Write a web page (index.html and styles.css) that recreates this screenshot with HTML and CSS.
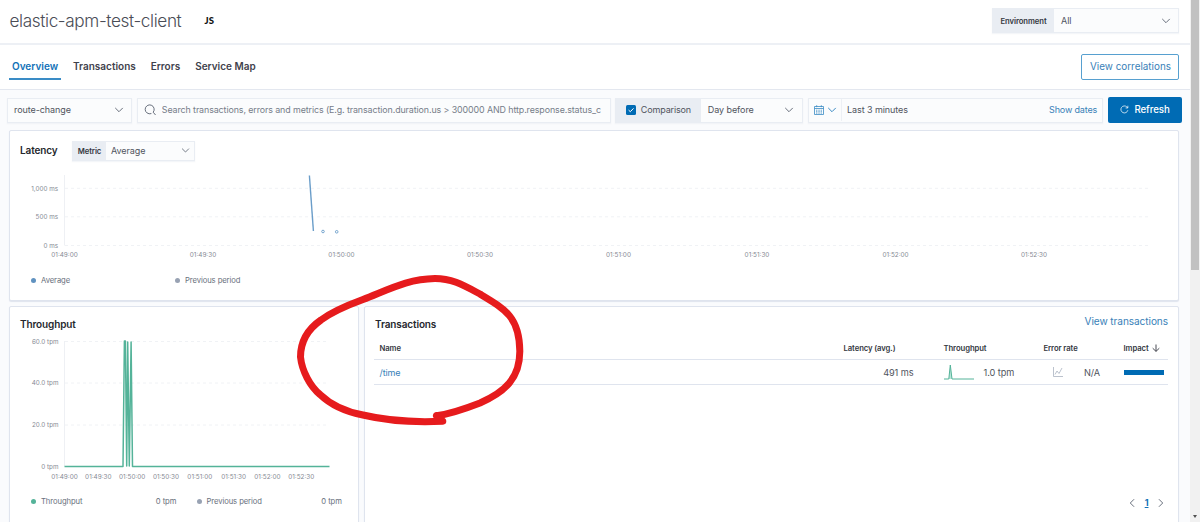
FILE: index.html
```html
<!DOCTYPE html>
<html lang="en">
<head>
<meta charset="utf-8">
<title>elastic-apm-test-client</title>
<link rel="stylesheet" href="styles.css">
</head>
<body>
<svg class="defs" width="0" height="0"><defs>
  <symbol id="down" viewBox="0 0 10 10"><path d="M1.500 3.200 5 6.700 8.500 3.200" fill="none" stroke="currentColor" stroke-linecap="round" stroke-linejoin="round"/></symbol>
</defs></svg>
<div class="app">
  <main class="page">
    <header class="header">
      <h1 class="title">elastic-apm-test-client</h1>
      <span class="agent">JS</span>
      <div class="control env"><span class="prepend">Environment</span><span class="value">All</span><svg class="chev"><use href="#down"/></svg></div>
    </header>
    <nav class="tabs">
      <a class="tab active">Overview</a><a class="tab">Transactions</a><a class="tab">Errors</a><a class="tab">Service Map</a>
      <button class="correlations">View correlations</button>
    </nav>
    <section class="filters">
      <div class="control type"><span class="value">route-change</span><svg class="chev"><use href="#down"/></svg></div>
      <div class="control search">
        <svg class="lens" viewBox="0 0 12 12"><path d="M7 9.700A4.500 4.500 0 1 1 9.200 8.200L11.300 10.700" fill="none" stroke="currentColor" stroke-linecap="round"/></svg>
        <span class="placeholder">Search transactions, errors and metrics (E.g. transaction.duration.us &gt; 300000 AND http.response.status_c</span>
      </div>
      <div class="control compare">
        <span class="check-label"><svg class="check" viewBox="0 0 10 10"><rect width="10" height="10" rx="1.500" fill="#006bb4"/><path d="M2.600 5.100 4.300 6.700 7.500 3.400" fill="none" stroke="#fff"/></svg>Comparison</span>
        <span class="value">Day before</span><svg class="chev"><use href="#down"/></svg>
      </div>
      <div class="control dates">
        <span class="quick">
          <svg class="cal" viewBox="0 0 10 10"><path d="M.5 1.500h9v8h-9zM.5 3.500h9M2.700.2v2M7.300.2v2" fill="none" stroke="currentColor" stroke-width=".8"/><path d="M2 5.200h6M2 6.700h6M2 8.100h6" stroke="currentColor" stroke-width=".8" stroke-dasharray="1 .65"/></svg>
          <svg class="chev"><use href="#down"/></svg>
        </span>
        <span class="value">Last 3 minutes</span><a class="show">Show dates</a>
      </div>
      <button class="refresh"><svg viewBox="0 0 10 10"><path d="M8.700 5.800A3.900 3.900 0 1 1 7.700 2.200L8.600 3.200M8.700.8V3.300H6.200" fill="none" stroke="currentColor" stroke-width=".8"/></svg>Refresh</button>
    </section>
    <section class="panel latency">
      <div class="panel-head"><h2>Latency</h2>
        <div class="control metric"><span class="prepend">Metric</span><span class="value">Average</span><svg class="chev"><use href="#down"/></svg></div>
      </div>
      <svg class="chart" width="1150" height="100" viewBox="20 165 1150 100">
        <g class="grid"><path d="M65 188.300H1149M65 216.800H1149M65 245.500H1149"/></g>
        <path class="axis" d="M64.500 175V245.500"/>
        <g class="ticks end"><text x="58" y="190.500">1,000 ms</text><text x="58" y="219">500 ms</text><text x="58" y="247.800">0 ms</text></g>
        <g class="ticks mid"><text x="64.500" y="257">01:49:00</text><text x="203" y="257">01:49:30</text><text x="341.500" y="257">01:50:00</text><text x="480" y="257">01:50:30</text><text x="618.500" y="257">01:51:00</text><text x="757" y="257">01:51:30</text><text x="895.500" y="257">01:52:00</text><text x="1034" y="257">01:52:30</text></g>
        <g class="latency-series"><path d="M309.400 175.500 313.400 231"/><circle cx="323" cy="231.500" r="1.300"/><circle cx="336.700" cy="231.800" r="1.300"/></g>
      </svg>
      <div class="legend"><span class="key avg">Average</span><span class="key prev">Previous period</span></div>
    </section>
    <div class="columns">
      <section class="panel throughput">
        <h2>Throughput</h2>
        <svg class="chart" width="330" height="150" viewBox="20 335 330 150">
          <g class="grid"><path d="M65 341.500H329M65 383H329M65 425H329"/></g>
          <path class="axis" d="M64.500 341V466"/>
          <g class="ticks end"><text x="58.500" y="343.600">60.0 tpm</text><text x="58.500" y="385.300">40.0 tpm</text><text x="58.500" y="427.200">20.0 tpm</text><text x="58.500" y="469">0 tpm</text></g>
          <g class="ticks mid"><text x="64.500" y="478.500">01:49:00</text><text x="98.300" y="478.500">01:49:30</text><text x="132.200" y="478.500">01:50:00</text><text x="166" y="478.500">01:50:30</text><text x="199.800" y="478.500">01:51:00</text><text x="233.600" y="478.500">01:51:30</text><text x="267.400" y="478.500">01:52:00</text><text x="301.200" y="478.500">01:52:30</text></g>
          <path class="tpm" d="M64.500 466.500H123L124.400 341H125.400L126.700 466L127.700 342L129.300 466L131.100 342L132.500 466.500H329.500"/>
        </svg>
        <div class="legend"><span class="key tp">Throughput</span><span class="num">0 tpm</span><span class="key prev">Previous period</span><span class="num">0 tpm</span></div>
      </section>
      <section class="panel transactions">
        <div class="tx-head"><h2>Transactions</h2><a>View transactions</a></div>
        <div class="row head"><span>Name</span><span class="right">Latency (avg.)</span><span>Throughput</span><span>Error rate</span><span>Impact <svg class="arrow" viewBox="0 0 8 8"><path d="M4 .5V7.300M.7 4.200 4 7.400 7.300 4.200" fill="none" stroke="currentColor" stroke-width=".9"/></svg></span></div>
        <div class="row">
          <a class="name">/time</a><span class="right">491 ms</span>
          <span class="cell"><svg class="spark" viewBox="0 0 30 18"><path d="M0 16H4.800L6.300 2 8 16H30" fill="#6dccb1" fill-opacity=".5" stroke="#54b399"/></svg>1.0 tpm</span>
          <span class="cell err"><svg class="noline" viewBox="0 0 10 10"><path d="M.5 0V9.500H10M2 7.500 4 4 6 6.500 9 1" fill="none" stroke="currentColor" stroke-width=".8"/></svg>N/A</span>
          <span class="bar"></span>
        </div>
        <div class="pager"><svg class="chev left"><use href="#down"/></svg><b>1</b><svg class="chev next"><use href="#down"/></svg></div>
      </section>
    </div>
  </main>
  <aside class="scrollbar"><div class="thumb"></div><i class="down"></i></aside>
  <svg class="annotation" viewBox="0 0 1200 522"><path d="M436.500 415.800C450 414 462 410 480 403C505 392 520 378 519.800 351C519.500 317 505 309 480 294C463 285 452 278.500 435 278.500C408 279 390 289 363 299.500C348 305 333 311 321 320C308 329 300.500 342 300.500 357C302 371 310 386 320 394.500C333 407 347 412 363 415C388 421 415 422.500 442.800 421.200L436.500 415.800"/></svg>
</div>
</body>
</html>
```
FILE: styles.css
```css
* { box-sizing: border-box; }
body { margin: 0; font-family: Inter, "Liberation Sans", sans-serif; font-size: 9px; letter-spacing: -.08px; color: #50545d; background: #fafbfd; overflow: hidden; }
h1, h2 { margin: 0; }
button { font-family: inherit; letter-spacing: inherit; padding: 0; }
svg { display: block; flex: none; }
.defs { position: absolute; }
.app { position: relative; display: flex; height: 522px; }
.page { width: 1190px; display: flex; flex-direction: column; }

.header { height: 45px; flex: none; display: flex; align-items: center; padding: 0 11px 2px 9.500px; background: #fff; border-bottom: 2px solid #edf0f5; }
.title { font-size: 17.200px; font-weight: 300; letter-spacing: -.38px; color: #4a4d56; width: 195px; white-space: nowrap; }
.agent { font-family: Lato, sans-serif; font-weight: 900; font-size: 9.500px; letter-spacing: .1px; color: #111; }
.control { display: flex; align-items: center; height: 25px; border: 1px solid #e9edf3; background: #fbfcfd; box-shadow: 0 1px 1px #e9edf380; white-space: nowrap; }
.value { flex: 1; padding-left: 7px; }
.chev { width: 10px; height: 10px; color: #69707d; }
.prepend { flex: none; height: 100%; display: flex; align-items: center; justify-content: center; padding-top: 1px; background: #e9edf3; font-weight: 600; font-size: 7.700px; color: #343741; }
.env { margin-left: auto; width: 187px; padding-right: 7px; }
.env .prepend { width: 61px; }

.tabs { height: 45px; flex: none; display: flex; align-items: center; padding: 0 11px 0 9px; gap: 11px; background: #fff; border-bottom: 1px solid #e3e7ef; letter-spacing: 0; }
.tab { height: 26px; line-height: 25px; padding: 0 2px; font-weight: 600; font-size: 10px; color: #3f424c; }
.tab.active { color: #1272b8; padding: 0 2.500px 0 3px; margin-right: -.5px; border-bottom: 2px solid #3a8cc6; }
.correlations { margin-left: auto; width: 98px; height: 26px; border: 1px solid #57a0d0; border-radius: 2px; background: #fff; color: #3981b8; font-size: 9.900px; line-height: 22px; padding: 0 0 2px 1px; }

.filters { height: 40px; flex: none; display: flex; align-items: center; padding: 0 8px 0 7px; }
.filters .control { padding-bottom: 1px; }
.type { width: 125px; padding-right: 7px; }
.type .value { padding-left: 6px; }
.search { width: 474px; margin-left: 5px; padding: 0 9px 0 6px; }
.lens { width: 12px; height: 12px; color: #69707d; }
.placeholder { margin-left: 6px; overflow: hidden; color: #767c89; font-size: 8.900px; letter-spacing: -.1px; }
.compare { width: 188px; margin-left: 4px; padding-right: 8px; }
.check-label { flex: none; width: 85px; height: 24px; margin-bottom: -1px; padding-bottom: 1px; display: flex; align-items: center; gap: 5px; padding-left: 10px; background: #e9edf3; letter-spacing: -.16px; }
.check { width: 10px; height: 10px; }
.dates { width: 296px; margin-left: 5px; padding-right: 5px; }
.quick { flex: none; width: 33px; height: 100%; display: flex; align-items: center; gap: 3px; padding-left: 5px; border-right: 1px solid #edf0f5; }
.cal { width: 10px; height: 10px; color: #3b8bc4; }
.quick .chev { color: #3b8bc4; }
.dates .value { padding-left: 5.500px; }
.show { color: #3981b8; letter-spacing: -.16px; }
.refresh { width: 74px; height: 26px; margin-left: 5px; padding-bottom: 1px; display: flex; align-items: center; justify-content: center; gap: 5px; border: 0; border-radius: 2px; background: #006bb4; color: #fff; font-size: 9.700px; font-weight: 500; }
.refresh svg { width: 9px; height: 9px; }

.panel { background: #fff; border: 1px solid #dfe4ee; border-radius: 2px; box-shadow: 0 1px 1px #dfe4ee; }
h2 { font-size: 10px; line-height: 13px; font-weight: 600; letter-spacing: -.12px; color: #25272d; }
.latency { height: 171px; flex: none; margin: 0 11px 0 9px; }
.panel-head { height: 34px; display: flex; align-items: center; padding: 5px 0 0 10px; }
.panel-head h2 { width: 37px; }
.metric { height: 20px; width: 123px; margin-left: 15px; padding-right: 4px; }
.metric .prepend { width: 33px; }
.metric .value { padding-left: 5px; }
.metric .chev { width: 9px; height: 9px; }
.chart { margin-left: 10px; letter-spacing: 0; }
.grid path { fill: none; stroke: #f0f2f5; stroke-dasharray: 3 3; }
.axis { stroke: #eef0f4; fill: none; }
.ticks { font-size: 6.300px; fill: #858993; }
.mid { font-size: 6.400px; }
.end { text-anchor: end; }
.mid { text-anchor: middle; }
.latency-series { fill: none; stroke: #6a9dc9; }
.latency-series path { stroke-width: 1.400; }
.latency-series circle { stroke-width: .9; }
.tpm { fill: none; stroke: #54b399; stroke-width: 1.500; stroke-linejoin: round; }
.legend { display: flex; align-items: center; height: 12px; padding-left: 21px; font-size: 7.650px; color: #69707d; white-space: nowrap; }
.latency .legend { margin-top: 9px; }
.key { flex: none; display: flex; align-items: center; gap: 5px; width: 144px; }
.key::before { content: ""; width: 5px; height: 5px; border-radius: 50%; background: #98a2b3; }
.key.avg::before { background: #6092c0; }
.key.tp::before { background: #54b399; }
.throughput .legend { margin-top: 10px; }
.throughput .key { width: 100.500px; }
.num { flex: none; width: 45px; text-align: right; margin-right: 20px; letter-spacing: 0; }
.num:last-child { margin-right: 0; }

.columns { flex: 1; display: flex; gap: 5px; margin: 5px 11px 0 9px; min-height: 0; }
.columns .panel { height: 240px; }
.throughput { flex: none; width: 350px; padding-top: 11px; }
.throughput h2 { padding-left: 10px; height: 17px; }
.transactions { flex: 1; padding: 7px 10px 0 9px; display: flex; flex-direction: column; }
.transactions a { color: #3981b8; }
.tx-head { display: flex; justify-content: space-between; height: 22px; }
.tx-head h2 { margin-top: 4px; padding-left: 1px; }
.tx-head a { font-size: 10.100px; line-height: 15px; }
.row { display: grid; grid-template-columns: 464px 70px 130px 80px 1fr; height: 25px; align-items: center; padding-left: 5.500px; border-bottom: 1px solid #dfe4ee; font-size: 9.200px; }
.row > :nth-child(3) { padding-left: 30px; }
.row.head { height: 24px; padding-top: 1px; font-size: 7.700px; font-weight: 600; color: #343741; }
.head span { display: flex; align-items: center; gap: 3px; }
.head .right { justify-content: flex-end; padding-right: 18px; white-space: nowrap; }
.right { text-align: right; }
.name { font-size: 9px; letter-spacing: -.1px; }
.arrow { width: 8px; height: 8px; }
.cell { display: flex; align-items: center; gap: 10px; height: 22px; }
.err { padding-left: 9.500px; gap: 21px; }
.spark { width: 30px; height: 18px; }
.noline { width: 10px; height: 10px; color: #a9b2c0; }
.bar { width: 40px; height: 5px; background: #006bb4; }
.pager { margin-top: 112px; display: flex; align-items: center; justify-content: flex-end; gap: 7.500px; padding-right: 2px; font-size: 9px; }
.pager b { color: #1272b8; text-decoration: underline; }
.left { transform: rotate(90deg); }
.next { transform: rotate(-90deg); }
.scrollbar { width: 10px; background: #f1f1f1; }
.thumb { width: 8px; height: 270px; margin-left: 1px; background: #c1c1c1; }
.down { display: block; width: 0; margin: 245px 0 0 3px; border: 2.500px solid transparent; border-top: 3px solid #505050; border-bottom: 0; }
.annotation { position: absolute; inset: 0; width: 1200px; height: 522px; pointer-events: none; }
.annotation path { fill: none; stroke: #e61b1d; stroke-width: 7; stroke-linecap: round; stroke-linejoin: round; }
```
